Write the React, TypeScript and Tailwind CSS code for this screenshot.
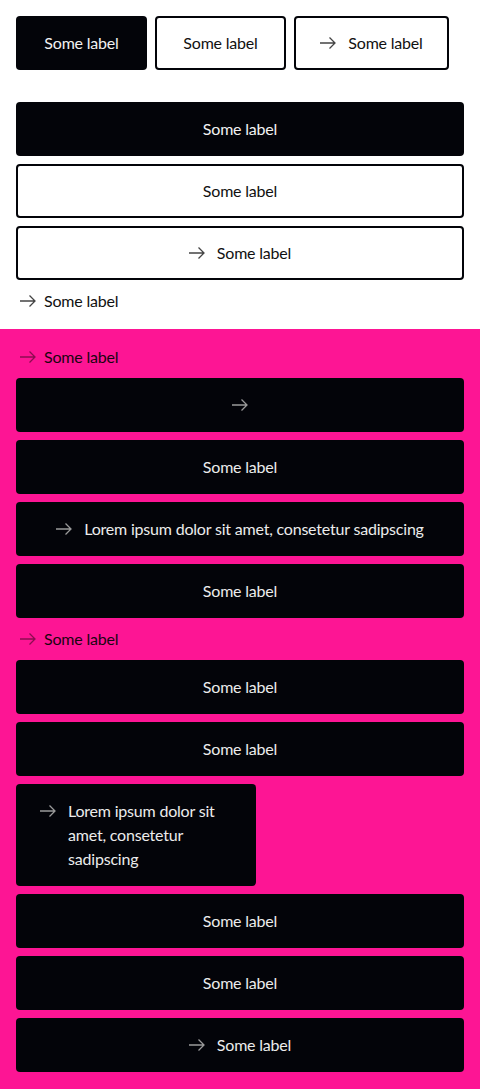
import type { ReactNode } from 'react'

function Arrow({ className = '' }: { className?: string }) {
  return (
    <svg
      className={className}
      width="16"
      height="12"
      viewBox="0 0 16 12"
      fill="none"
      stroke="currentColor"
      strokeWidth="1.3"
    >
      <path d="M0 6h15M9.5 0.5L15 6l-5.5 5.5" />
    </svg>
  )
}

type Variant = 'solid' | 'outline' | 'dark'

const base =
  'flex items-center justify-center gap-3 rounded-[4px] text-[16px] leading-6 tracking-[-0.2px]'

const variants: Record<Variant, string> = {
  solid: 'bg-[#030409] text-[#f2f2f2]',
  outline: 'bg-white border-2 border-[#030409] text-[#111]',
  dark: 'bg-[#030409] text-[#ececec]',
}

function Button({
  variant = 'dark',
  icon,
  children,
  className = 'h-[54px]',
}: {
  variant?: Variant
  icon?: boolean
  children?: ReactNode
  className?: string
}) {
  return (
    <button className={`${base} ${variants[variant]} ${className}`}>
      {icon && (
        <Arrow className={variant === 'outline' ? 'shrink-0 text-[#444]' : 'shrink-0 text-[#9a9a9a]'} />
      )}
      {children && <span>{children}</span>}
    </button>
  )
}

function TextLink({ dark }: { dark?: boolean }) {
  return (
    <a className={`flex items-center gap-2 h-[26px] pl-1 text-[16px] tracking-[-0.2px] ${dark ? 'text-[#1a0410]' : 'text-[#111]'}`}>
      <Arrow className={dark ? 'text-[#8c0c50]' : 'text-[#444]'} />
      <span>Some label</span>
    </a>
  )
}

export default function App() {
  return (
    <div className="w-[480px] bg-white" style={{ fontFamily: 'Lato, "Noto Sans", sans-serif' }}>
      {/* light section */}
      <div className="px-4 pt-4 pb-[15px] flex flex-col">
        <div className="flex gap-2">
          <Button variant="solid" className="h-[54px] w-[131px]">Some label</Button>
          <Button variant="outline" className="h-[54px] w-[131px]">Some label</Button>
          <Button variant="outline" icon className="h-[54px] w-[155px]">Some label</Button>
        </div>

        <div className="mt-8 flex flex-col gap-2">
          <Button variant="solid">Some label</Button>
          <Button variant="outline">Some label</Button>
          <Button variant="outline" icon>Some label</Button>
          <TextLink />
        </div>
      </div>

      {/* pink section */}
      <div className="bg-[#fd1594] px-4 pt-[15px] pb-[17px] flex flex-col gap-2">
        <TextLink dark />
        <Button icon />
        <Button>Some label</Button>
        <Button icon>Lorem ipsum dolor sit amet, consetetur sadipscing</Button>
        <Button>Some label</Button>
        <TextLink dark />
        <Button>Some label</Button>
        <Button>Some label</Button>
        <button className="w-[240px] flex gap-3 rounded-[4px] bg-[#030409] text-[#ececec] px-6 py-[15px] text-left text-[16px] leading-6 tracking-[-0.2px]">
          <span className="h-6 flex items-center shrink-0">
            <Arrow className="text-[#9a9a9a]" />
          </span>
          <span className="w-[164px]">Lorem ipsum dolor sit amet, consetetur sadipscing</span>
        </button>
        <Button>Some label</Button>
        <Button>Some label</Button>
        <Button icon>Some label</Button>
      </div>
    </div>
  )
}
